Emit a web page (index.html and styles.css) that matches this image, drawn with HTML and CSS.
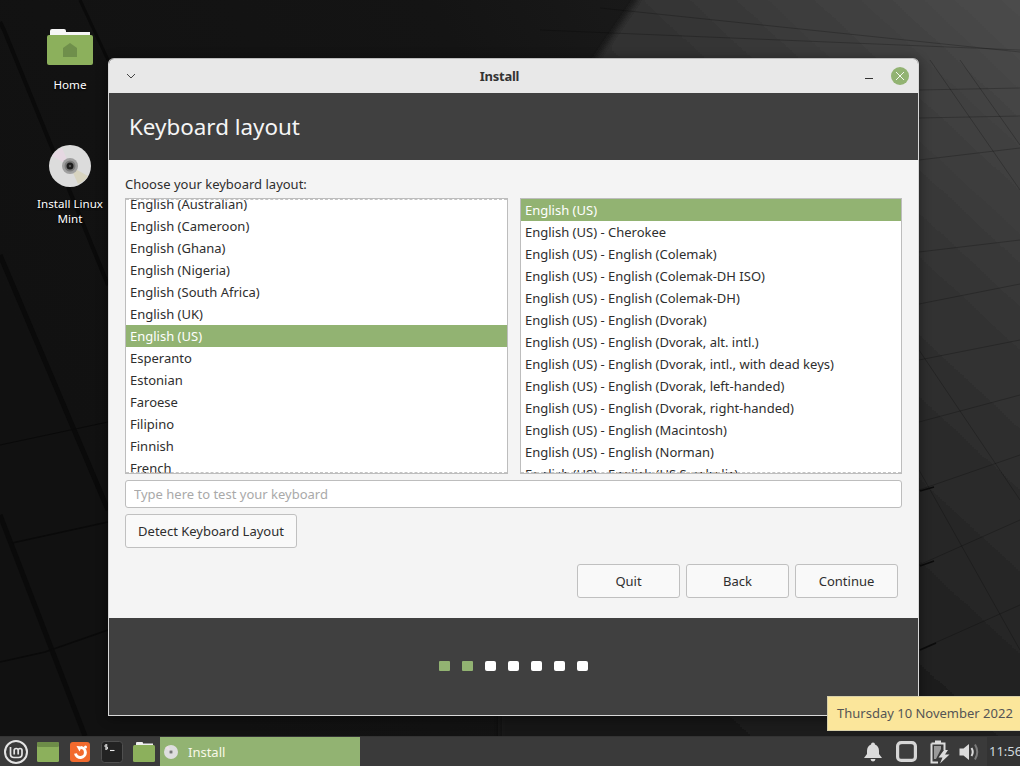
FILE: index.html
```html
<!DOCTYPE html>
<html>
<head>
  <title>Install</title>
  <meta name="viewport" content="width=device-width, initial-scale=1">
  <link rel="stylesheet" href="styles.css">
</head>
<body>
  <div class="desktop">
    <!-- fondo -->
    <svg class="wallpaper" viewBox="0 0 1020 736" xmlns="http://www.w3.org/2000/svg">
      <defs>
        <linearGradient id="lightSide" x1="1" y1="0" x2="0.35" y2="1">
          <stop offset="0" stop-color="#4d4d4d"/>
          <stop offset="0.35" stop-color="#333333"/>
          <stop offset="0.75" stop-color="#1e1e1e"/>
          <stop offset="1" stop-color="#181818"/>
        </linearGradient>
        <linearGradient id="darkSide" x1="1" y1="0" x2="0" y2="0.4">
          <stop offset="0" stop-color="#222222"/>
          <stop offset="0.5" stop-color="#141414"/>
          <stop offset="1" stop-color="#111111"/>
        </linearGradient>
        <filter id="soft"><feGaussianBlur stdDeviation="3"/></filter>
      </defs>
      <rect width="1020" height="736" fill="url(#darkSide)"/>
      <polygon points="644,-10 1030,-10 1030,746 500,746 500,200" fill="url(#lightSide)" filter="url(#soft)"/>
      <g stroke="#0a0a0a" fill="none">
        <path d="M0 22 L4 30 L108 285" stroke-width="4"/>
        <path d="M0 255 L108 510" stroke-width="5"/>
        <path d="M0 515 L85 736" stroke-width="5"/>
        <path d="M80 0 L108 60" stroke-width="3"/>
        <path d="M0 445 L108 422" stroke-width="1"/>
        <path d="M12 543 L108 522" stroke-width="1.5"/>
        <path d="M0 662 L45 652 L108 630" stroke-width="1.5"/>
      </g>
      <g stroke="#000" stroke-opacity="0.22" fill="none" stroke-width="1">
        <path d="M600 8 L1020 52"/>
        <path d="M540 30 L1020 50"/>
        <path d="M919 90 L1020 88"/>
        <path d="M919 118 L1020 116"/>
        <path d="M919 160 L1020 148"/>
        <path d="M919 252 L1020 240"/>
        <path d="M919 304 L1020 284"/>
        <path d="M919 360 L1020 340"/>
        <path d="M919 422 L1020 395"/>
        <path d="M919 490 L1020 455"/>
        <path d="M919 565 L1020 520"/>
        <path d="M919 650 L1020 605"/>
        <path d="M930 60 L1020 190"/>
        <path d="M960 60 L1020 145"/>
        <path d="M919 350 L1020 500"/>
        <path d="M919 470 L1020 650"/>
      </g>
      <g stroke="#0c0c0c" fill="none" stroke-width="1.5">
        <path d="M920 491 L934 487"/>
        <path d="M920 566 L934 561"/>
        <path d="M920 650 L936 643"/>
      </g>
    </svg>

    <div class="desktop-icons">
      <div class="desktop-icon">
        <svg class="home-icon" viewBox="0 0 46 36" xmlns="http://www.w3.org/2000/svg">
          <path d="M3 5 V2 Q3 0 5 0 H17 Q19 0 19 2 V3 H43 V6 H3 Z" fill="#f6f6f6"/>
          <rect x="0" y="6" width="46" height="30" rx="2" fill="#8cb05c"/>
          <path d="M23 14 L30 19 V28 H16 V19 Z" fill="#6f8f4b"/>
        </svg>
        <span class="icon-label">Home</span>
      </div>
      <div class="desktop-icon icon-cd">
        <svg class="cd-icon" viewBox="0 0 44 44" xmlns="http://www.w3.org/2000/svg">
          <circle cx="22" cy="22" r="21" fill="#dcdcdc"/>
          <path d="M22 22 L4 12 A21 21 0 0 1 14 4 Z" fill="#e6d8e2"/>
          <path d="M22 22 L40 32 A21 21 0 0 1 30 40 Z" fill="#d8d4c0"/>
          <circle cx="22" cy="22" r="8" fill="#a0a0a0"/>
          <circle cx="22" cy="22" r="5.5" fill="#7a7a7a"/>
          <circle cx="22" cy="22" r="3.5" fill="#1d1d1d"/>
          <circle cx="22" cy="22" r="1.2" fill="#555"/>
        </svg>
        <span class="icon-label">Install Linux<br>Mint</span>
      </div>
    </div>

    <div class="window">
      <div class="titlebar">
        <svg class="chevron" viewBox="0 0 10 6" xmlns="http://www.w3.org/2000/svg"><path d="M1 1 L5 5 L9 1" fill="none" stroke="#444" stroke-width="1"/></svg>
        <span class="title">Install</span>
        <span class="minimize"></span>
        <svg class="close" viewBox="0 0 18 18" xmlns="http://www.w3.org/2000/svg">
          <circle cx="9" cy="9" r="9" fill="#92b372"/>
          <path d="M5 5 L13 13 M13 5 L5 13" stroke="#f4f7ef" stroke-width="1"/>
        </svg>
      </div>
      <div class="header">Keyboard layout</div>
      <div class="content">
        <div class="choose">Choose your keyboard layout:</div>
        <div class="lists">
          <div class="list list-left">
            <div class="rows rows-scrolled">
              <div class="row">English (Australian)</div>
              <div class="row">English (Cameroon)</div>
              <div class="row">English (Ghana)</div>
              <div class="row">English (Nigeria)</div>
              <div class="row">English (South Africa)</div>
              <div class="row">English (UK)</div>
              <div class="row selected">English (US)</div>
              <div class="row">Esperanto</div>
              <div class="row">Estonian</div>
              <div class="row">Faroese</div>
              <div class="row">Filipino</div>
              <div class="row">Finnish</div>
              <div class="row">French</div>
            </div>
          </div>
          <div class="list list-right">
            <div class="rows">
              <div class="row selected">English (US)</div>
              <div class="row">English (US) - Cherokee</div>
              <div class="row">English (US) - English (Colemak)</div>
              <div class="row">English (US) - English (Colemak-DH ISO)</div>
              <div class="row">English (US) - English (Colemak-DH)</div>
              <div class="row">English (US) - English (Dvorak)</div>
              <div class="row">English (US) - English (Dvorak, alt. intl.)</div>
              <div class="row">English (US) - English (Dvorak, intl., with dead keys)</div>
              <div class="row">English (US) - English (Dvorak, left-handed)</div>
              <div class="row">English (US) - English (Dvorak, right-handed)</div>
              <div class="row">English (US) - English (Macintosh)</div>
              <div class="row">English (US) - English (Norman)</div>
              <div class="row">English (US) - English (US Symbolic)</div>
            </div>
          </div>
        </div>
        <input class="test-input" type="text" placeholder="Type here to test your keyboard">
        <button class="btn btn-detect" type="button">Detect Keyboard Layout</button>
        <div class="actions">
          <button class="btn btn-action" type="button">Quit</button>
          <button class="btn btn-action" type="button">Back</button>
          <button class="btn btn-action" type="button">Continue</button>
        </div>
      </div>
      <div class="footer">
        <span class="dot done"></span>
        <span class="dot done"></span>
        <span class="dot"></span>
        <span class="dot"></span>
        <span class="dot"></span>
        <span class="dot"></span>
        <span class="dot"></span>
      </div>
    </div>

    <div class="tooltip">Thursday 10 November 2022</div>
  </div>

  <div class="panel">
    <div class="launchers">
      <svg class="mint-logo" viewBox="0 0 24 24" xmlns="http://www.w3.org/2000/svg">
        <circle cx="12" cy="12" r="11" fill="none" stroke="#e4e4e4" stroke-width="2"/>
        <path d="M6.5 7 V14 Q6.5 17.5 10 17.5 H14.5 Q18 17.5 18 14 V10.5 Q18 8.5 16 8.5 Q14.2 8.5 14.2 10.5 V14.5 M14.2 10.5 Q14.2 8.5 12.2 8.5 Q10.2 8.5 10.2 10.5 V14.5" fill="none" stroke="#e4e4e4" stroke-width="1.7"/>
      </svg>
      <svg class="launcher" viewBox="0 0 22 20" xmlns="http://www.w3.org/2000/svg">
        <rect x="0" y="0" width="22" height="20" rx="1.5" fill="#8cb05c"/>
        <rect x="0" y="0" width="22" height="5" rx="1.5" fill="#6d8c48"/>
      </svg>
      <svg class="launcher launcher-fox" viewBox="0 0 20 20" xmlns="http://www.w3.org/2000/svg">
        <rect width="20" height="20" rx="3" fill="#f26a2e"/>
        <path d="M11 5.5 A5 5 0 1 1 5.5 11.5" fill="none" stroke="#fff" stroke-width="3"/>
        <path d="M6.5 4 L12 4.5 L9.5 9.5 Z" fill="#fff"/>
        <circle cx="15.5" cy="5" r="1.5" fill="#fff"/>
      </svg>
      <svg class="launcher launcher-term" viewBox="0 0 22 22" xmlns="http://www.w3.org/2000/svg">
        <rect x="0.5" y="0.5" width="21" height="21" rx="3" fill="#232323" stroke="#4f4f4f"/>
        <path d="M6.5 4 H4 V6 H6.5 V8 H4 M5.2 3 V9" fill="none" stroke="#e8e8e8" stroke-width="0.9"/>
        <path d="M9 9.5 H13.5" stroke="#e8e8e8" stroke-width="1.1"/>
      </svg>
      <svg class="launcher launcher-folder" viewBox="0 0 22 20" xmlns="http://www.w3.org/2000/svg">
        <path d="M3 3 V1 Q3 0 4 0 H9 Q10 0 10 1 V1.5 H20 V4 H3 Z" fill="#f0f0f0"/>
        <rect x="0" y="3" width="22" height="17" rx="1.5" fill="#8cb05c"/>
      </svg>
    </div>
    <div class="task-button">
      <svg class="task-cd" viewBox="0 0 14 14" xmlns="http://www.w3.org/2000/svg">
        <circle cx="7" cy="7" r="7" fill="#dedede"/>
        <path d="M7 7 L1 3 A7 7 0 0 1 4 1 Z" fill="#eadfe6"/>
        <circle cx="7" cy="7" r="2" fill="#a8a8a8"/>
        <circle cx="7" cy="7" r="1" fill="#666"/>
      </svg>
      <span>Install</span>
    </div>
    <div class="tray">
      <svg class="tray-icon bell" viewBox="0 0 18 20" xmlns="http://www.w3.org/2000/svg">
        <path d="M9 0.5 Q11 0.5 11 2.5 Q15 4 15 9 V12 L18 16 H0 L3 12 V9 Q3 4 7 2.5 Q7 0.5 9 0.5 Z M6.5 17 H11.5 Q11 19.5 9 19.5 Q7 19.5 6.5 17 Z" fill="#dcdcdc"/>
      </svg>
      <svg class="tray-icon square" viewBox="0 0 21 21" xmlns="http://www.w3.org/2000/svg">
        <rect x="1.6" y="1.6" width="17.8" height="17.8" rx="3.5" fill="none" stroke="#d6d6d6" stroke-width="3.2"/>
        <path d="M6 3.5 H15 L17 5.5 V17 H4 V5.5 Z" fill="#3d3d3d"/>
      </svg>
      <svg class="tray-icon battery" viewBox="0 0 20 24" xmlns="http://www.w3.org/2000/svg">
        <path d="M5 0.5 H11 V3 H5 Z" fill="#dcdcdc"/>
        <path d="M1.5 3.5 H14.5 V10 M8 22.5 H1.5 V3.5" fill="none" stroke="#dcdcdc" stroke-width="2"/>
        <path d="M4 6 H11 V9 L6 19 H4 Z" fill="#9a9a9a"/>
        <path d="M14 10 L8.5 17.5 H12.5 L10 23.5 L19.5 14.5 H15 L18 10 Z" fill="#dcdcdc"/>
      </svg>
      <svg class="tray-icon sound" viewBox="0 0 22 22" xmlns="http://www.w3.org/2000/svg">
        <path d="M0.5 7.5 H4.5 L10 3 V19 L4.5 14.5 H0.5 Z" fill="#dcdcdc"/>
        <path d="M12.5 7 Q15 11 12.5 15" fill="none" stroke="#dcdcdc" stroke-width="2"/>
        <path d="M16 3.5 Q20.5 11 16 18.5" fill="none" stroke="#7a7a7a" stroke-width="2"/>
      </svg>
      <div class="clock">11:56</div>
    </div>
  </div>
</body>
</html>
```

FILE: styles.css
```css
* {
  box-sizing: border-box;
}

body {
  margin: 0;
  width: 1020px;
  height: 766px;
  overflow: hidden;
  display: flex;
  flex-direction: column;
  background-color: #111;
  font-family: "Noto Sans", sans-serif;
  font-size: 13px;
  color: #2e2e2e;
}

/* escritorio */
.desktop {
  flex: 1;
  position: relative;
  overflow: hidden;
}

.wallpaper {
  position: absolute;
  left: 0;
  top: 0;
  width: 1020px;
  height: 736px;
}

.desktop-icons {
  position: relative;
  display: flex;
  flex-direction: column;
  width: 140px;
  padding-top: 29px;
}

.desktop-icon {
  display: flex;
  flex-direction: column;
  align-items: center;
  gap: 12px;
  color: #fff;
  font-size: 11.6px;
  line-height: 15px;
  text-align: center;
  text-shadow: 0 1px 2px #000;
}

.icon-cd {
  margin-top: 52px;
  gap: 8px;
}

.home-icon {
  width: 46px;
  height: 36px;
}

.cd-icon {
  width: 44px;
  height: 44px;
}

/* ventana */
.window {
  position: absolute;
  left: 108px;
  top: 58px;
  width: 811px;
  height: 658px;
  display: flex;
  flex-direction: column;
  border: 1px solid #d8d8d8;
  border-top-color: #bcbcbc;
  border-radius: 6px 6px 0 0;
  box-shadow: 0 2px 12px rgba(0, 0, 0, 0.45);
  overflow: hidden;
}

.titlebar {
  height: 34px;
  flex-shrink: 0;
  display: flex;
  align-items: center;
  position: relative;
  background-color: #e8e8e8;
  padding: 0 9px 1px 17px;
}

.chevron {
  width: 10px;
  height: 6px;
}

.title {
  flex: 1;
  text-align: center;
  font-weight: 700;
  font-size: 13px;
  letter-spacing: -0.25px;
  color: #333;
  padding-right: 2px;
}

.minimize {
  width: 8px;
  height: 1px;
  margin: 6px 18px 0 0;
  background-color: #333;
}

.close {
  width: 18px;
  height: 18px;
}

.header {
  height: 67px;
  flex-shrink: 0;
  background-color: #404040;
  color: #f5f5f5;
  font-size: 22.4px;
  line-height: 67px;
  padding-left: 20px;
}

.content {
  flex: 1;
  display: flex;
  flex-direction: column;
  align-items: flex-start;
  background-color: #f4f4f4;
  padding: 15px 16px 0;
}

.choose {
  line-height: 18px;
  height: 23px;
}

.lists {
  display: flex;
  gap: 12px;
  height: 276px;
  width: 777px;
}

.list {
  position: relative;
  height: 276px;
  background-color: #fff;
  border: 1px solid #bdbdbd;
  overflow: hidden;
}

.list-left {
  width: 383px;
}

.list-right {
  width: 382px;
}

/* lineas de desplazamiento */
.list::before,
.list::after {
  content: "";
  position: absolute;
  left: 0;
  right: 0;
  border-top: 1px dashed #c4c4c4;
}

.list::before {
  top: 0;
}

.list::after {
  bottom: 0;
}

.list-right::before {
  display: none;
}

.rows-scrolled {
  margin-top: -6px;
}

.row {
  height: 22px;
  line-height: 22px;
  padding-left: 4px;
  white-space: nowrap;
}

.row.selected {
  background-color: #92b372;
  color: #fff;
}

.test-input {
  width: 777px;
  height: 28px;
  margin-top: 6px;
  padding: 0 8px;
  border: 1px solid #bdbdbd;
  border-radius: 3px;
  background-color: #fff;
  font-family: inherit;
  font-size: 13px;
}

.test-input::placeholder {
  color: #a9a9a9;
}

.btn {
  height: 34px;
  border: 1px solid #c0c0c0;
  border-radius: 3px;
  background-color: #f9f9f9;
  font-family: inherit;
  font-size: 13px;
  color: #2e2e2e;
  padding: 0;
}

.btn-detect {
  width: 172px;
  margin-top: 6px;
}

.actions {
  display: flex;
  gap: 6px;
  margin-top: 16px;
  align-self: flex-end;
  margin-right: 4px;
}

.btn-action {
  width: 103px;
}

.footer {
  height: 97px;
  flex-shrink: 0;
  display: flex;
  justify-content: center;
  align-items: center;
  gap: 12px;
  background-color: #404040;
  padding-bottom: 1px;
}

.dot {
  width: 11px;
  height: 10px;
  border-radius: 2px;
  background-color: #fff;
}

.dot.done {
  border-radius: 1px;
  background-color: #92b372;
}

.tooltip {
  position: absolute;
  right: 0;
  top: 696px;
  width: 193px;
  height: 35px;
  line-height: 33px;
  padding-left: 9px;
  background-color: #fbe69b;
  border: 1px solid #d8d0a8;
  border-right: none;
  color: #555;
  white-space: nowrap;
}

/* panel */
.panel {
  height: 30px;
  flex-shrink: 0;
  display: flex;
  align-items: stretch;
  background-color: #3a3a3a;
  border-top: 1px solid #333;
}

.launchers {
  display: flex;
  align-items: center;
  width: 160px;
  padding-left: 4px;
}

.mint-logo {
  width: 24px;
  height: 24px;
}

.launcher {
  width: 22px;
  height: 20px;
  margin-left: 9px;
}

.launcher-fox {
  width: 20px;
  margin-left: 11px;
}

.launcher-term {
  height: 22px;
  margin-left: 11px;
}

.launcher-folder {
  margin-left: 10px;
}

.task-button {
  width: 200px;
  display: flex;
  align-items: center;
  gap: 10px;
  padding-left: 4px;
  background-color: #92b372;
  color: #f8f8e8;
}

.task-cd {
  width: 14px;
  height: 14px;
}

.tray {
  flex: 1;
  display: flex;
  align-items: center;
  justify-content: flex-end;
}

.tray-icon {
  flex-shrink: 0;
}

.bell {
  width: 18px;
  height: 20px;
  margin-right: 14px;
}

.square {
  width: 21px;
  height: 21px;
  margin-right: 13px;
}

.battery {
  width: 20px;
  height: 24px;
  margin-right: 9px;
}

.sound {
  width: 22px;
  height: 22px;
  margin-right: 6px;
}

.clock {
  width: 33px;
  height: 100%;
  line-height: 29px;
  padding-left: 2px;
  background-color: #333;
  color: #cfd8dc;
  white-space: nowrap;
  overflow: hidden;
}
```
